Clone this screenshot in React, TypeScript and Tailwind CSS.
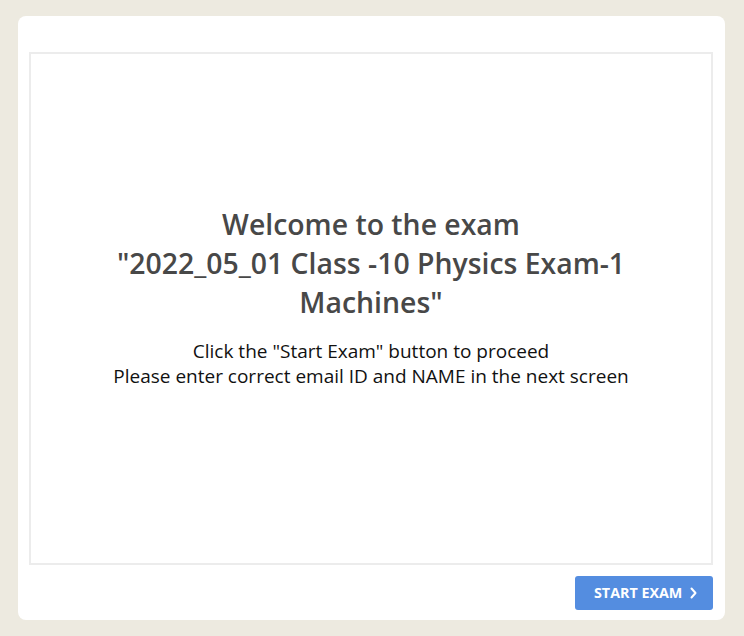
import React from "react";

export default function App() {
  return (
    <div
      className="w-[744px] h-[636px] bg-[#edeae0] pt-[16px] pl-[18px]"
      style={{ fontFamily: '"Open Sans", "Liberation Sans", sans-serif' }}
    >
      <div className="w-[707px] h-[604px] bg-white rounded-[8px] pt-[36px] pl-[11px] pr-[12px] flex flex-col">
        <div className="h-[513px] border-2 border-[#ececec] flex flex-col items-center justify-center pb-[23px] text-center">
          <h1 className="text-[28.4px] leading-[39px] font-semibold text-[#484848]">
            Welcome to the exam
            <br />
            "2022_05_01 Class -10 Physics Exam-1
            <br />
            Machines"
          </h1>
          <div className="mt-[17px] text-[19px] leading-[25px] text-[#111]">
            Click the "Start Exam" button to proceed
            <br />
            Please enter correct email ID and NAME in the next screen
          </div>
        </div>
        <div className="flex justify-end pt-[11px]">
          <button className="w-[138px] h-[34px] bg-[#548de0] rounded-[3px] text-white text-[14.3px] font-bold flex items-center pl-[19px]">
            <span>START EXAM</span>
            <svg className="ml-[8px]" width="7" height="12" viewBox="0 0 7 12" fill="none">
              <path d="M1.5 1.5L5.5 6L1.5 10.5" stroke="white" strokeWidth="2" strokeLinecap="round" strokeLinejoin="round" />
            </svg>
          </button>
        </div>
      </div>
    </div>
  );
}
